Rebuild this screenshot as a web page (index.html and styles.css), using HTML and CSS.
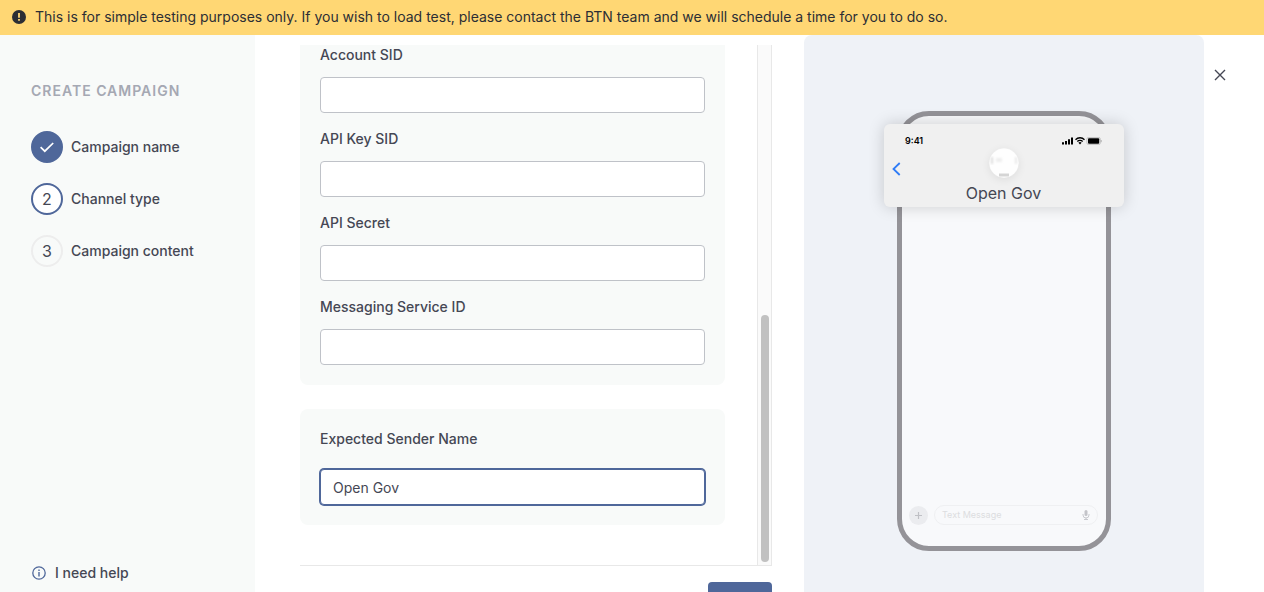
FILE: index.html
```html
<!DOCTYPE html>
<html lang="en">
<head>
<meta charset="utf-8">
<title>Create campaign</title>
<link rel="stylesheet" href="styles.css">
</head>
<body>
<div class="banner" role="status">
  <svg class="banner-icon" width="14" height="14" viewBox="0 0 14 14" aria-hidden="true">
    <circle cx="7" cy="7" r="7" fill="#2c2e34"/>
    <path d="M6.1 3h1.8v4.8H6.1zM6.1 9h1.8v1.8H6.1z" fill="#ffd774"/>
  </svg>
  <span>This is for simple testing purposes only. If you wish to load test, please contact the BTN team and we will schedule a time for you to do so.</span>
</div>
<div class="modal">
  <aside class="sidebar">
    <h1 class="sidebar-title">Create campaign</h1>
    <ol class="steps">
      <li class="step">
        <span class="step-mark step-done">
          <svg width="16" height="16" viewBox="0 0 16 16" aria-label="Done"><path d="M1.6 8.2 5.8 12.2 14.2 4" fill="none" stroke="#fff" stroke-width="1.7"/></svg>
        </span>
        <span>Campaign name</span>
      </li>
      <li class="step" aria-current="step"><span class="step-mark step-current">2</span><span>Channel type</span></li>
      <li class="step"><span class="step-mark">3</span><span>Campaign content</span></li>
    </ol>
    <a class="help" href="#help">
      <svg width="14" height="14" viewBox="0 0 14 14" aria-hidden="true">
        <circle cx="7" cy="7" r="6.2" fill="none" stroke="#4f679a" stroke-width="1.3"/>
        <path d="M6.3 3.6h1.4v1.5H6.3zM6.3 6.1h1.4v4.3H6.3z" fill="#4f679a"/>
      </svg>
      <span>I need help</span>
    </a>
  </aside>
  <main class="content">
    <form class="form">
      <div class="scroller">
        <div class="sections">
          <section class="card">
            <div class="field"><label for="account">Account SID</label><input id="account" type="text"></div>
            <div class="field"><label for="key">API Key SID</label><input id="key" type="text"></div>
            <div class="field"><label for="secret">API Secret</label><input id="secret" type="text"></div>
            <div class="field"><label for="service">Messaging Service ID</label><input id="service" type="text"></div>
          </section>
          <section class="card">
            <div class="field field-sender"><label for="sender">Expected Sender Name</label><input id="sender" class="active" type="text" value="Open Gov"></div>
          </section>
        </div>
        <div class="track"><div class="thumb"></div></div>
      </div>
      <div class="actions"><button class="next" type="button" aria-label="Next"></button></div>
    </form>
  </main>
  <section class="preview" aria-label="Message preview">
    <div class="phone">
      <div class="phone-body">
        <div class="composer">
          <svg width="19" height="19" viewBox="0 0 19 19" aria-hidden="true"><circle cx="9.5" cy="9.5" r="9.5" fill="#ebecef"/><path d="M9.5 6v7M6 9.5h7" stroke="#bfc0c5" stroke-width="1.2"/></svg>
          <div class="message">
            <span>Text Message</span>
            <svg width="8" height="10" viewBox="0 0 8 10" aria-hidden="true"><rect x="2.5" y="0" width="3" height="6" rx="1.5" fill="#c3c4c9"/><path d="M1 4v1a3 3 0 0 0 6 0V4M4 8v1.5M2 9.5h4" fill="none" stroke="#c3c4c9" stroke-width=".9"/></svg>
          </div>
        </div>
      </div>
      <div class="phone-header">
        <div class="status">
          <span>9:41</span>
          <svg width="40" height="8" viewBox="0 0 40 8" aria-hidden="true">
            <path d="M0 5.2h2V7.5H0zM3 4h2v3.5H3zM6 2.3h2v5.2H6zM9 .5h2v7H9z" fill="#000"/>
            <path d="M13.5 2.7a6.2 6.2 0 0 1 9 0M15.3 4.5a3.8 3.8 0 0 1 5.4 0" fill="none" stroke="#000" stroke-width="1.3"/>
            <path d="M16.4 5.7a2.3 2.3 0 0 1 3.2 0L18 7.4z" fill="#000"/>
            <rect x="24.9" y=".4" width="13.4" height="7.2" rx="1.8" fill="#f0f0f0" stroke="#b5b5b5" stroke-width=".8"/>
            <rect x="26" y="1.3" width="11.2" height="5.4" rx="1" fill="#000"/>
            <path d="M39.2 3v2.2" stroke="#aaa" stroke-width=".9"/>
          </svg>
        </div>
        <div class="contact">
          <svg class="back" width="9" height="14" viewBox="0 0 9 14" aria-hidden="true"><path d="M7.7 1 1.5 7l6.2 6" fill="none" stroke="#2f7cf6" stroke-width="1.8"/></svg>
          <svg class="avatar" width="30" height="30" viewBox="0 0 30 30" aria-hidden="true">
            <defs>
              <clipPath id="disc"><circle cx="15" cy="15" r="14.5"/></clipPath>
              <filter id="soft"><feGaussianBlur stdDeviation=".9"/></filter>
            </defs>
            <circle cx="15" cy="15" r="14.5" fill="#fefefe"/>
            <g clip-path="url(#disc)"><g filter="url(#soft)" fill="#dcdcdc">
              <rect x="2" y="9" width="2" height="7"/><rect x="7" y="10" width="6" height="4" fill="#eee"/><rect x="26" y="9" width="2" height="7" fill="#e8e8e8"/></g>
              <rect x="10" y="25.5" width="10" height="3" fill="#d5d5d5"/></g>
          </svg>
        </div>
        <div class="contact-name">Open Gov</div>
      </div>
    </div>
  </section>
  <div class="close-area">
    <button class="close" type="button" aria-label="Close"><svg width="12" height="12" viewBox="0 0 12 12" aria-hidden="true"><path d="m1 1 10 10M11 1 1 11" stroke="#454754" stroke-width="1.4"/></svg></button>
  </div>
</div>
</body>
</html>
```
FILE: styles.css
```css
* { box-sizing: border-box; }
body {
  margin: 0;
  height: 100vh;
  display: flex;
  flex-direction: column;
  overflow: hidden;
  background: #fff;
  color: #454754;
  font: 400 14px/20px Inter, "Liberation Sans", sans-serif;
}
.banner {
  display: flex;
  align-items: center;
  gap: 9px;
  flex: none;
  padding: 7px 12px 8px;
  background: #ffd774;
  color: #2c2e34;
}
.banner-icon { flex: none; }
.modal { display: flex; flex: 1; min-height: 0; }
.sidebar {
  display: flex;
  flex-direction: column;
  flex: none;
  width: 255px;
  padding: 46px 31px 9px;
  background: #f8faf9;
  font-weight: 500;
}
.sidebar-title {
  margin: 0 0 30px;
  color: #a5a8b3;
  font-size: 14px;
  font-weight: 600;
  line-height: 20px;
  letter-spacing: 1px;
  text-transform: uppercase;
}
.steps {
  display: flex;
  flex-direction: column;
  gap: 20px;
  margin: 0;
  padding: 0;
  list-style: none;
}
.step { display: flex; align-items: center; gap: 8px; }
.step-mark {
  display: flex;
  align-items: center;
  justify-content: center;
  width: 32px;
  height: 32px;
  border: 2px solid #ededed;
  border-radius: 50%;
  font-size: 16px;
  font-weight: 400;
}
.step-done { border-color: #4f679a; background: #4f679a; }
.step-current { border-color: #4f679a; background: #fff; }
.help {
  display: flex;
  align-items: center;
  gap: 9px;
  margin-top: auto;
  padding-left: 1px;
  color: inherit;
  text-decoration: none;
}
.content { flex: 1; min-width: 0; padding: 10px 32px 0 45px; }
.form { display: flex; flex-direction: column; height: 100%; }
.scroller {
  display: flex;
  flex: 1;
  min-height: 0;
  overflow: hidden;
  border-bottom: 1px solid #e8e8e8;
}
.sections {
  display: flex;
  flex: 1;
  flex-direction: column;
  justify-content: flex-end;
  gap: 24px;
  padding: 0 32px 40px 0;
}
.card {
  display: flex;
  flex: none;
  flex-direction: column;
  gap: 16px;
  padding: 20px;
  border-radius: 8px;
  background: #f8faf9;
}
.field { display: flex; flex-direction: column; gap: 12px; }
.field-sender { gap: 20px; }
.field label { font-weight: 500; }
.field input {
  width: 100%;
  height: 36px;
  padding: 0 12px;
  border: 1px solid #bfc2c8;
  border-radius: 4px;
  outline: none;
  background: #fff;
  color: inherit;
  font: inherit;
}
.field .active { border-color: #4f679a; box-shadow: 0 0 0 1px #4f679a; }
.track {
  display: flex;
  flex-direction: column;
  justify-content: flex-end;
  width: 15px;
  padding: 3px;
  border: solid #e8e8e8;
  border-width: 0 1px;
  background: #fafafa;
}
.thumb { width: 8px; height: 48%; border-radius: 4px; background: #c1c1c1; }
.actions { display: flex; flex: 0 0 26px; align-items: flex-start; justify-content: flex-end; min-height: 0; height: 26px; }
.next {
  flex: none;
  width: 64px;
  height: 40px;
  margin-top: 16px;
  padding: 0;
  border: 0;
  border-radius: 4px;
  background: #4f679a;
}
.preview {
  display: flex;
  justify-content: center;
  align-items: flex-start;
  flex: none;
  width: 400px;
  padding-top: 76px;
  border-radius: 8px 8px 0 0;
  background: #eff2f7;
}
.phone { position: relative; width: 240px; padding: 0 13px; }
.phone-body {
  display: flex;
  flex-direction: column;
  justify-content: flex-end;
  height: 440px;
  padding: 0 8px 21px 7px;
  border: 5px solid #949398;
  border-radius: 32px;
  background: #f8f9fb;
}
.composer { display: flex; align-items: center; gap: 6px; }
.message {
  display: flex;
  flex: 1;
  align-items: center;
  justify-content: space-between;
  height: 20px;
  padding: 0 7px;
  border: 1px solid #eff0f2;
  border-radius: 10px;
  color: #dcdde0;
  font-size: 9px;
}
.phone-header {
  position: absolute;
  top: 13px;
  left: 0;
  width: 100%;
  height: 83px;
  padding: 10px 22px 0 21px;
  border-radius: 6px;
  background: #f0f0f0;
  box-shadow: 0 0 16px rgba(0, 0, 0, .18);
}
.status {
  display: flex;
  align-items: center;
  justify-content: space-between;
  height: 14px;
  color: #000;
  font-size: 9px;
  font-weight: 600;
}
.contact { display: flex; justify-content: center; }
.back { position: absolute; top: 38px; left: 8px; }
.avatar { border-radius: 50%; box-shadow: 0 2px 8px rgba(0, 0, 0, .08); }
.contact-name { padding-top: 5px; font-size: 16px; text-align: center; }
.close-area { display: flex; justify-content: center; flex: none; width: 60px; padding: 28px 28px 0 0; }
.close {
  display: flex;
  align-items: center;
  justify-content: center;
  flex: none;
  width: 24px;
  height: 24px;
  padding: 0;
  border: 0;
  background: none;
}
```
